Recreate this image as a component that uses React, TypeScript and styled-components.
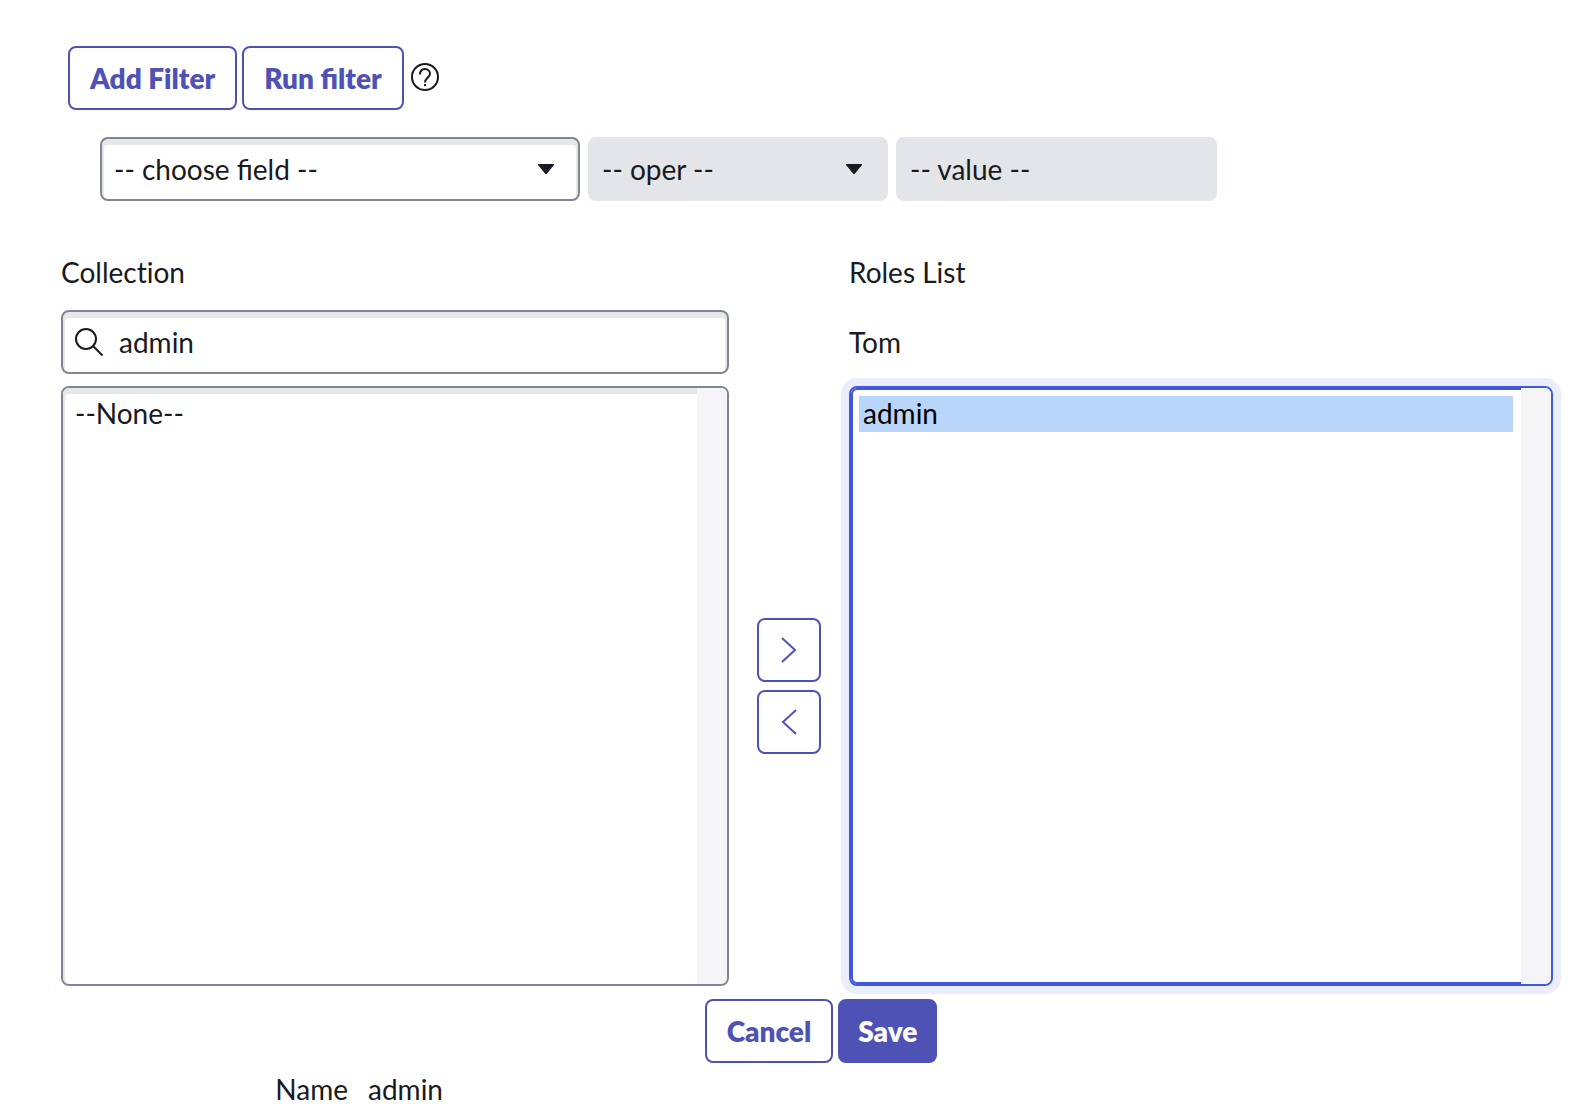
import React from "react";
import styled, { createGlobalStyle, css } from "styled-components";

const color = {
  ink: "#181a21",
  brand: "#4f52b5",
  border: "#7f8592",
  insetShade: "#e6e8e7",
  disabled: "#e4e5e9",
  track: "#f5f5f7",
  focus: "#4159df",
  halo: "#ebedfb",
  picked: "#b9d5fa",
};

const GlobalStyle = createGlobalStyle`
  *, *::before, *::after { box-sizing: border-box; }
  body {
    margin: 0;
    background: #fff;
    color: ${color.ink};
    font: 28px/36px Lato, "Open Sans", sans-serif;
  }
  button, input, select { font: inherit; color: inherit; margin: 0; }
`;

const Page = styled.main`
  padding-top: 46px;
`;

const Toolbar = styled.div`
  display: flex;
  align-items: center;
  gap: 5px;
  padding: 0 35px 0 68px;
`;

const Button = styled.button<{ $primary?: boolean }>`
  height: 64px;
  padding: 0 ${(p) => (p.$primary ? 18 : 20)}px;
  border: 2px solid ${color.brand};
  border-radius: 8px;
  background: ${(p) => (p.$primary ? color.brand : "#fff")};
  color: ${(p) => (p.$primary ? "#fff" : color.brand)};
  font-weight: 800;
  white-space: nowrap;
  cursor: pointer;
`;

const MoveButton = styled(Button)`
  display: grid;
  place-items: center;
  width: 64px;
  padding: 0;
`;

const HelpButton = styled.button`
  display: grid;
  padding: 0;
  border: 0;
  background: none;
  cursor: pointer;
`;

const FilterRow = styled.div`
  display: flex;
  gap: 8px;
  padding: 27px 35px 0 100px;
`;

const field = css`
  height: 64px;
  border: 2px solid ${color.border};
  border-radius: 8px;
  background: #fff;
  box-shadow: inset 0 4px 0 2px ${color.insetShade};
  outline: none;

  &:disabled {
    border-color: ${color.disabled};
    background: ${color.disabled};
    box-shadow: none;
    color: ${color.ink};
    opacity: 1;
  }
`;

const SelectWrap = styled.div<{ $width: number }>`
  display: grid;
  align-items: center;
  flex: 0 1 ${(p) => p.$width}px;

  & > * { grid-area: 1 / 1; }
  & > svg { justify-self: end; margin-right: 26px; pointer-events: none; }
`;

const Select = styled.select`
  ${field}
  width: 100%;
  padding: 0 48px 0 12px;
  appearance: none;
`;

const ValueInput = styled.input`
  ${field}
  flex: 0 1 321px;
  min-width: 0;
  padding: 0 12px;
  &::placeholder { color: ${color.ink}; opacity: 1; }
`;

const Slushbucket = styled.div`
  display: grid;
  grid-template-columns: minmax(0, 668fr) 64px minmax(0, 704fr);
  gap: 28px;
  padding: 53px 35px 0 61px;
`;

const Column = styled.div`
  display: flex;
  flex-direction: column;
`;

const Title = styled.label`
  margin-bottom: 20px;
  font-variant-ligatures: none;
`;

const Owner = styled.div`
  height: 64px;
  line-height: 64px;
`;

const SearchWrap = styled.div`
  display: grid;
  align-items: center;

  & > * { grid-area: 1 / 1; }
  & > svg { margin-left: 13px; pointer-events: none; }
`;

const SearchInput = styled.input`
  ${field}
  width: 100%;
  padding: 0 12px 0 56px;
`;

const ListFrame = styled.div<{ $focused?: boolean }>`
  display: flex;
  height: 600px;
  margin-top: 12px;
  overflow: hidden;
  border: 2px solid ${(p) => (p.$focused ? color.focus : color.border)};
  border-radius: 8px;
  box-shadow: ${(p) => (p.$focused ? `0 0 0 8px ${color.halo}` : "none")};
`;

const List = styled.select<{ $focused?: boolean }>`
  flex: 1;
  min-width: 0;
  padding: 8px;
  border: 0;
  border-radius: 6px 0 0 6px;
  outline: none;
  background: #fff;
  overflow: hidden;
  box-shadow: ${(p) =>
    p.$focused
      ? `inset 0 2px ${color.focus}, inset 2px 0 ${color.focus}, inset 0 -2px ${color.focus}`
      : `inset 0 6px ${color.insetShade}, inset 2px 0 ${color.insetShade}`};

  option {
    min-height: 36px;
    padding: 0 4px;
    line-height: 36px;
  }
  option:checked {
    background: linear-gradient(${color.picked}, ${color.picked});
    color: #000;
    -webkit-text-fill-color: #000;
  }
`;

const ScrollTrack = styled.div`
  flex: 0 0 30px;
  background: ${color.track};
`;

const Movers = styled.div`
  display: flex;
  flex-direction: column;
  justify-content: center;
  gap: 8px;
  height: 600px;
  align-self: end;
`;

const Actions = styled.div`
  display: flex;
  justify-content: center;
  gap: 5px;
  padding: 13px 0 8px 54px;
`;

const Details = styled.dl`
  display: grid;
  grid-template-columns: 287px 1fr;
  gap: 20px;
  margin: 0;
  padding: 0 35px 0 61px;

  dt { text-align: right; }
  dd { margin: 0; }
`;

const Caret = () => (
  <svg width="16" height="10" viewBox="0 0 16 10" aria-hidden="true">
    <path d="M0 0h16v1L9 9.500Q8 10.500 7 9.500L0 1z" fill={color.ink} />
  </svg>
);

const HelpIcon = () => (
  <svg width="32" height="32" viewBox="0 0 32 32" fill="none" stroke={color.ink} strokeWidth="2" aria-hidden="true">
    <circle cx="16" cy="15" r="13" />
    <path d="M11 12.5C11 9 13 7 16 7s5 2 5 4.800c0 4-5 4.200-5 8.700" />
    <path d="M16 22v2" />
  </svg>
);

const SearchIcon = () => (
  <svg width="30" height="30" viewBox="0 0 30 30" fill="none" stroke={color.ink} strokeWidth="2" aria-hidden="true">
    <circle cx="12" cy="12" r="10" />
    <path d="M19 19l9.500 9.500" />
  </svg>
);

const Chevron = ({ left = false }: { left?: boolean }) => (
  <svg width="16" height="28" viewBox="0 0 16 28" fill="none" stroke={color.brand} strokeWidth="2" aria-hidden="true">
    <path d={left ? "M15 2L2 14l13 12" : "M1 2l13 12L1 26"} />
  </svg>
);

export default function App() {
  return (
    <>
      <GlobalStyle />
      <Page>
        <Toolbar>
          <Button type="button">Add Filter</Button>
          <Button type="button">Run filter</Button>
          <HelpButton type="button" aria-label="Help">
            <HelpIcon />
          </HelpButton>
        </Toolbar>

        <FilterRow>
          <SelectWrap $width={480}>
            <Select aria-label="Field">
              <option>-- choose field --</option>
            </Select>
            <Caret />
          </SelectWrap>
          <SelectWrap $width={300}>
            <Select aria-label="Operator" disabled>
              <option>-- oper --</option>
            </Select>
            <Caret />
          </SelectWrap>
          <ValueInput aria-label="Value" placeholder="-- value --" disabled />
        </FilterRow>

        <Slushbucket>
          <Column>
            <Title htmlFor="collection">Collection</Title>
            <SearchWrap>
              <SearchInput type="text" aria-label="Search collection" defaultValue="admin" />
              <SearchIcon />
            </SearchWrap>
            <ListFrame>
              <List id="collection" multiple size={16}>
                <option>--None--</option>
              </List>
              <ScrollTrack />
            </ListFrame>
          </Column>

          <Movers>
            <MoveButton type="button" aria-label="Add">
              <Chevron />
            </MoveButton>
            <MoveButton type="button" aria-label="Remove">
              <Chevron left />
            </MoveButton>
          </Movers>

          <Column>
            <Title htmlFor="roles">Roles List</Title>
            <Owner>Tom</Owner>
            <ListFrame $focused>
              <List id="roles" multiple size={16} defaultValue={["admin"]} $focused>
                <option value="admin">admin</option>
              </List>
              <ScrollTrack />
            </ListFrame>
          </Column>
        </Slushbucket>

        <Actions>
          <Button type="button">Cancel</Button>
          <Button type="button" $primary>
            Save
          </Button>
        </Actions>

        <Details>
          <dt>Name</dt>
          <dd>admin</dd>
        </Details>
      </Page>
    </>
  );
}
